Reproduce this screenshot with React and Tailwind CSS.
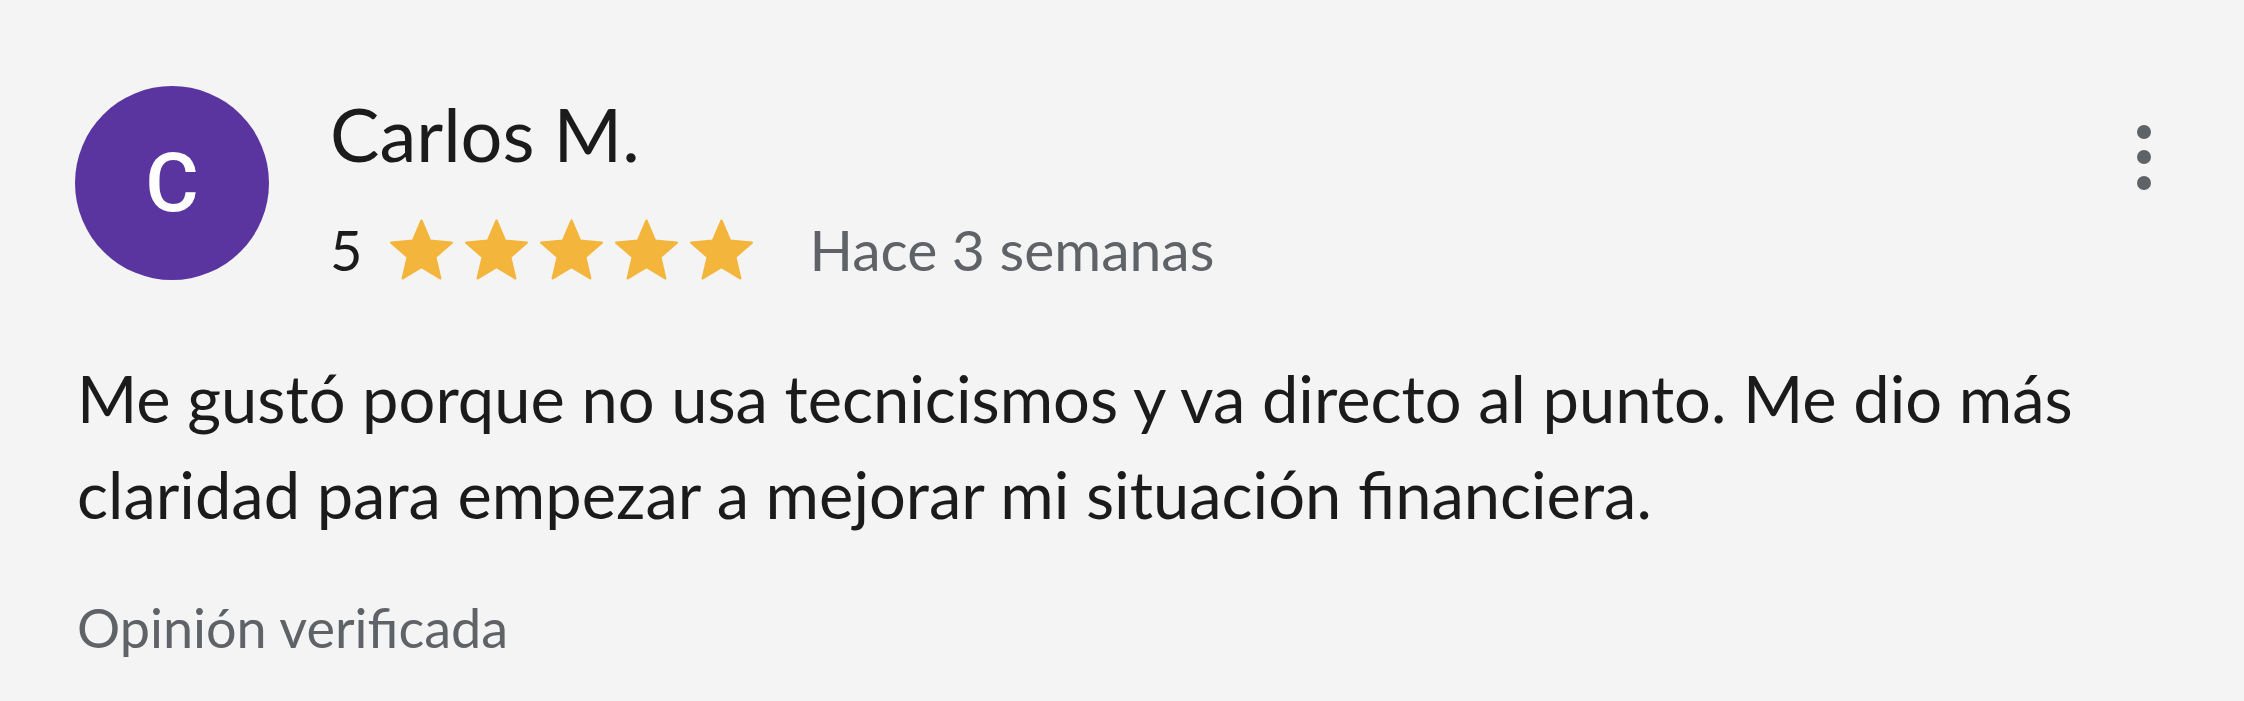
import React from 'react'

const Star = () => (
  <svg width="63" height="61" viewBox="1.6 1.6 20.8 19.8" className="shrink-0">
    <path
      d="M12 17.27L18.18 21l-1.64-7.03L22 9.24l-7.19-.61L12 2 9.19 8.63 2 9.24l5.46 4.73L5.82 21z"
      fill="#f3b53b"
      stroke="#f3b53b"
      strokeWidth="0.8"
      strokeLinejoin="round"
    />
  </svg>
)

const MoreIcon = () => (
  <svg width="20" height="72" viewBox="0 0 20 72" className="shrink-0">
    <circle cx="10" cy="12" r="7" fill="#5f6368" />
    <circle cx="10" cy="37" r="7" fill="#5f6368" />
    <circle cx="10" cy="63" r="7" fill="#5f6368" />
  </svg>
)

export default function App() {
  const review = {
    author: 'Carlos M.',
    rating: 5,
    when: 'Hace 3 semanas',
    text: 'Me gustó porque no usa tecnicismos y va directo al punto. Me dio más claridad para empezar a mejorar mi situación financiera.',
  }

  return (
    <main className="min-h-[701px] w-full bg-[#f4f4f4] font-['Lato','Noto_Sans',sans-serif]">
      <div className="pl-[75px] pr-[90px] pt-[86px] pb-[40px]">
        {/* header: avatar, name, rating */}
        <div className="flex items-start">
          <div className="w-[194px] h-[194px] rounded-full bg-[#5a35a0] flex items-center justify-center shrink-0">
            <span className="text-white text-[82px] font-medium leading-none font-['Roboto',sans-serif]">C</span>
          </div>
          <div className="ml-[61px] flex-1 pt-[11px]">
            <h2 className="text-[74px] leading-none text-[#1b1b1b]">{review.author}</h2>
            <div className="flex items-center mt-[48px]">
              <span className="text-[56px] leading-none text-[#1b1b1b] mr-[28px]">{review.rating}</span>
              <div className="flex items-center gap-[12px]">
                {Array.from({ length: review.rating }).map((_, i) => (
                  <Star key={i} />
                ))}
              </div>
              <span className="ml-[56px] text-[57px] leading-none text-[#5f6368]">{review.when}</span>
            </div>
          </div>
          <div className="pt-[34px]">
            <MoreIcon />
          </div>
        </div>

        {/* body */}
        <p className="mt-[70px] pl-[2px] text-[65px] leading-[96px] text-[#1b1b1b]">{review.text}</p>
        <p className="mt-[54px] pl-[2px] text-[54px] leading-[1.2] text-[#5f6368]">Opinión verificada</p>
      </div>
    </main>
  )
}
